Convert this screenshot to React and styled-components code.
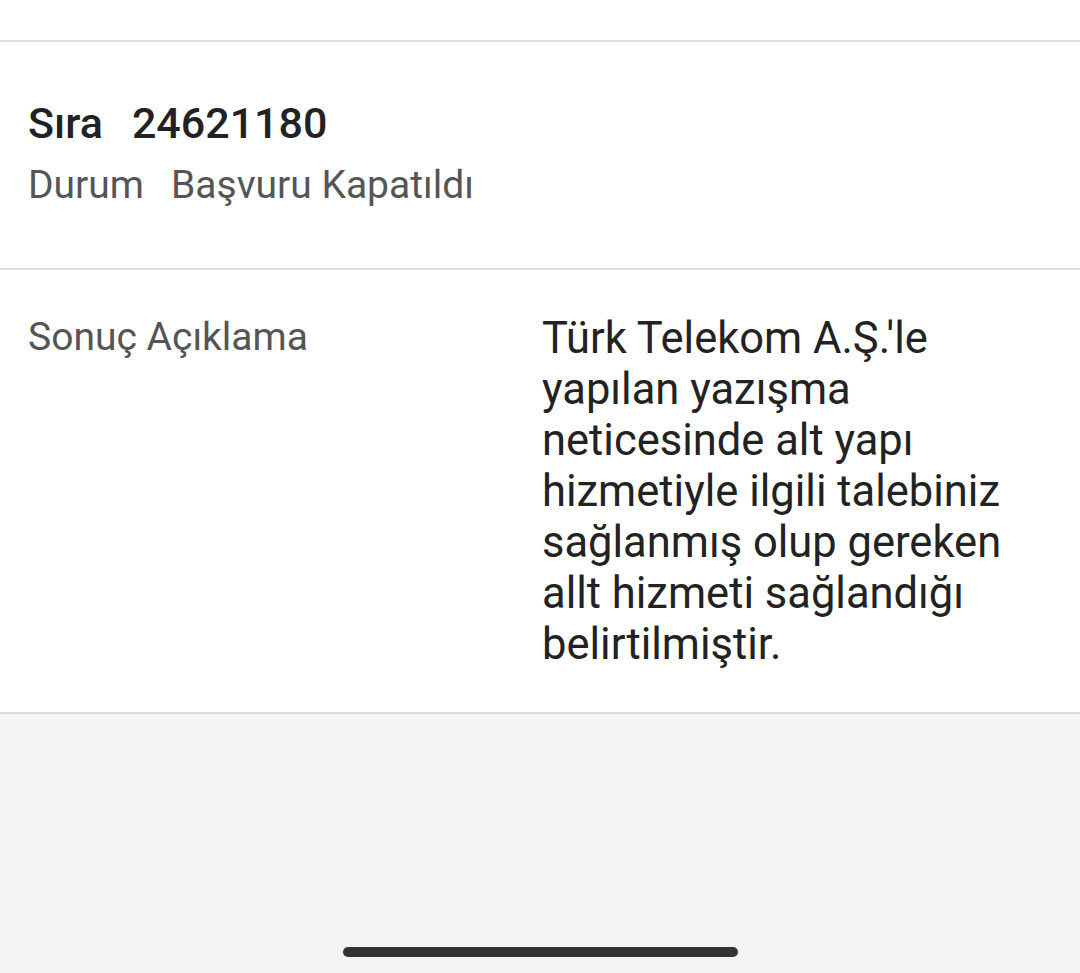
import React from 'react'
import styled, { createGlobalStyle } from 'styled-components'

const GlobalStyle = createGlobalStyle`
  html, body {
    margin: 0;
    padding: 0;
    background: #f4f5f7;
  }
  body {
    font-family: Roboto, "Noto Sans", "Liberation Sans", sans-serif;
    -webkit-font-smoothing: antialiased;
  }
`

const Page = styled.div`
  width: 1080px;
  height: 973px;
  display: flex;
  flex-direction: column;
  background: #f4f5f7;
  overflow: hidden;
`

const TopStrip = styled.div`
  height: 40px;
  background: #fff;
  border-bottom: 2px solid #dedede;
`

const Summary = styled.div`
  background: #fff;
  height: 226px;
  padding: 0 28px;
  display: flex;
  flex-direction: column;
  justify-content: center;
  border-bottom: 2px solid #dedede;
`

const Line = styled.div`
  display: flex;
  gap: ${p => p.gap || 30}px;
  font-size: ${p => p.size}px;
  font-weight: ${p => p.weight || 400};
  color: ${p => p.color};
  line-height: ${p => p.lh}px;
`

const DetailRow = styled.div`
  background: #fff;
  display: grid;
  grid-template-columns: 514px 1fr;
  padding: 42px 28px 42px;
  border-bottom: 2px solid #dadada;
`

const Label = styled.div`
  font-size: 39px;
  color: #555;
  line-height: 50px;
`

const Value = styled.div`
  font-size: 43.5px;
  color: #222;
  line-height: 51px;
  padding-top: 1px;
`

const Filler = styled.div`
  flex: 1;
  background: #f4f5f7;
`

const NavBar = styled.div`
  height: 45px;
  background: #f2f3f5;
  display: flex;
  justify-content: center;
  align-items: flex-start;
  padding-top: 19px;
  box-sizing: border-box;
`

const HomeBar = styled.div`
  width: 395px;
  height: 10px;
  border-radius: 5px;
  background: #333;
`

export default function App() {
  return (
    <Page>
      <GlobalStyle />
      <TopStrip />
      <Summary>
        <Line size={43} weight={500} color="#222" lh={60} gap={29}>
          <span>Sıra</span>
          <span>24621180</span>
        </Line>
        <Line size={39} color="#555" lh={64} gap={27}>
          <span>Durum</span>
          <span>Başvuru Kapatıldı</span>
        </Line>
      </Summary>
      <DetailRow>
        <Label>Sonuç Açıklama</Label>
        <Value>
          Türk Telekom A.Ş.'le yapılan yazışma neticesinde alt yapı hizmetiyle ilgili talebiniz sağlanmış olup gereken allt hizmeti sağlandığı belirtilmiştir.
        </Value>
      </DetailRow>
      <Filler />
      <NavBar>
        <HomeBar />
      </NavBar>
    </Page>
  )
}
